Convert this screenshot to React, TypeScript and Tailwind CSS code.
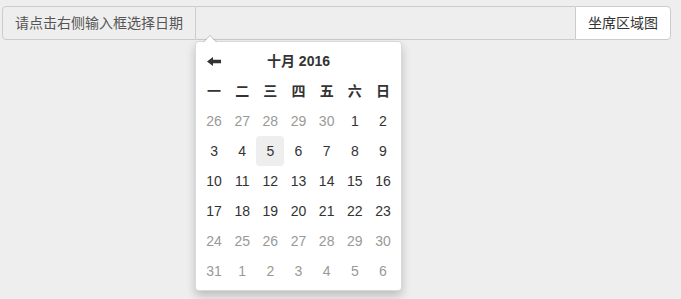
const FONT = "font-['Liberation_Sans','Noto_Sans_CJK_SC',sans-serif]"

type Day = { n: number; muted: boolean; active?: boolean }

// 十月 2016 — 24 号以后不可选
const weeks: Day[][] = (() => {
  const days: Day[] = []
  ;[26, 27, 28, 29, 30].forEach(n => days.push({ n, muted: true }))
  for (let n = 1; n <= 31; n++) days.push({ n, muted: n >= 24, active: n === 5 })
  ;[1, 2, 3, 4, 5, 6].forEach(n => days.push({ n, muted: true }))
  const rows: Day[][] = []
  for (let i = 0; i < days.length; i += 7) rows.push(days.slice(i, i + 7))
  return rows
})()

const weekdays = ['一', '二', '三', '四', '五', '六', '日']

function ArrowLeft() {
  return (
    <svg width="14" height="9" viewBox="0 0 14 9" className="block">
      <path d="M0 4.5 L6 0 L6 2.8 L14 2.8 L14 6.2 L6 6.2 L6 9 Z" fill="#333" />
    </svg>
  )
}

function DatePicker() {
  return (
    <div className="absolute left-[195px] top-[41px] w-[207px] bg-white border border-black/15 rounded-[4px] shadow-[0_5px_10px_rgba(0,0,0,0.2)] p-[4px]">
      {/* 小三角 */}
      <div className="absolute left-[7px] -top-[7px] w-0 h-0 border-x-[7px] border-x-transparent border-b-[7px] border-b-black/20" />
      <div className="absolute left-[8px] -top-[6px] w-0 h-0 border-x-[6px] border-x-transparent border-b-[6px] border-b-white" />

      <div className="grid grid-cols-7 text-[14px] text-[#333]">
        <div className="h-[30px] flex items-center justify-center">
          <ArrowLeft />
        </div>
        <div className="col-span-5 h-[30px] flex items-center justify-center font-bold">十月 2016</div>
        <div className="h-[30px]" />

        {weekdays.map(w => (
          <div key={w} className="h-[30px] flex items-center justify-center font-bold">{w}</div>
        ))}

        {weeks.flat().map((d, i) => (
          <div
            key={i}
            className={`h-[30px] flex items-center justify-center rounded-[4px] ${d.muted ? 'text-[#999]' : 'text-[#333]'} ${d.active ? 'bg-[#eee]' : ''}`}
          >
            {d.n}
          </div>
        ))}
      </div>
    </div>
  )
}

export default function App() {
  return (
    <div className={`${FONT} min-h-[299px] bg-[#eee] pt-[6px] px-[2px] relative text-[14px]`}>
      <div className="flex w-[669px] h-[34px]">
        <div className="flex items-center px-[12px] border border-[#ccc] rounded-l-[4px] bg-[#eee] text-[#555] whitespace-nowrap">
          请点击右侧输入框选择日期
        </div>
        <div className="flex-1 border-y border-[#ccc] bg-[#eee]" />
        <div className="flex items-center px-[12px] border border-[#ccc] rounded-r-[4px] bg-white text-[#333] whitespace-nowrap">
          坐席区域图
        </div>
      </div>
      <DatePicker />
    </div>
  )
}
